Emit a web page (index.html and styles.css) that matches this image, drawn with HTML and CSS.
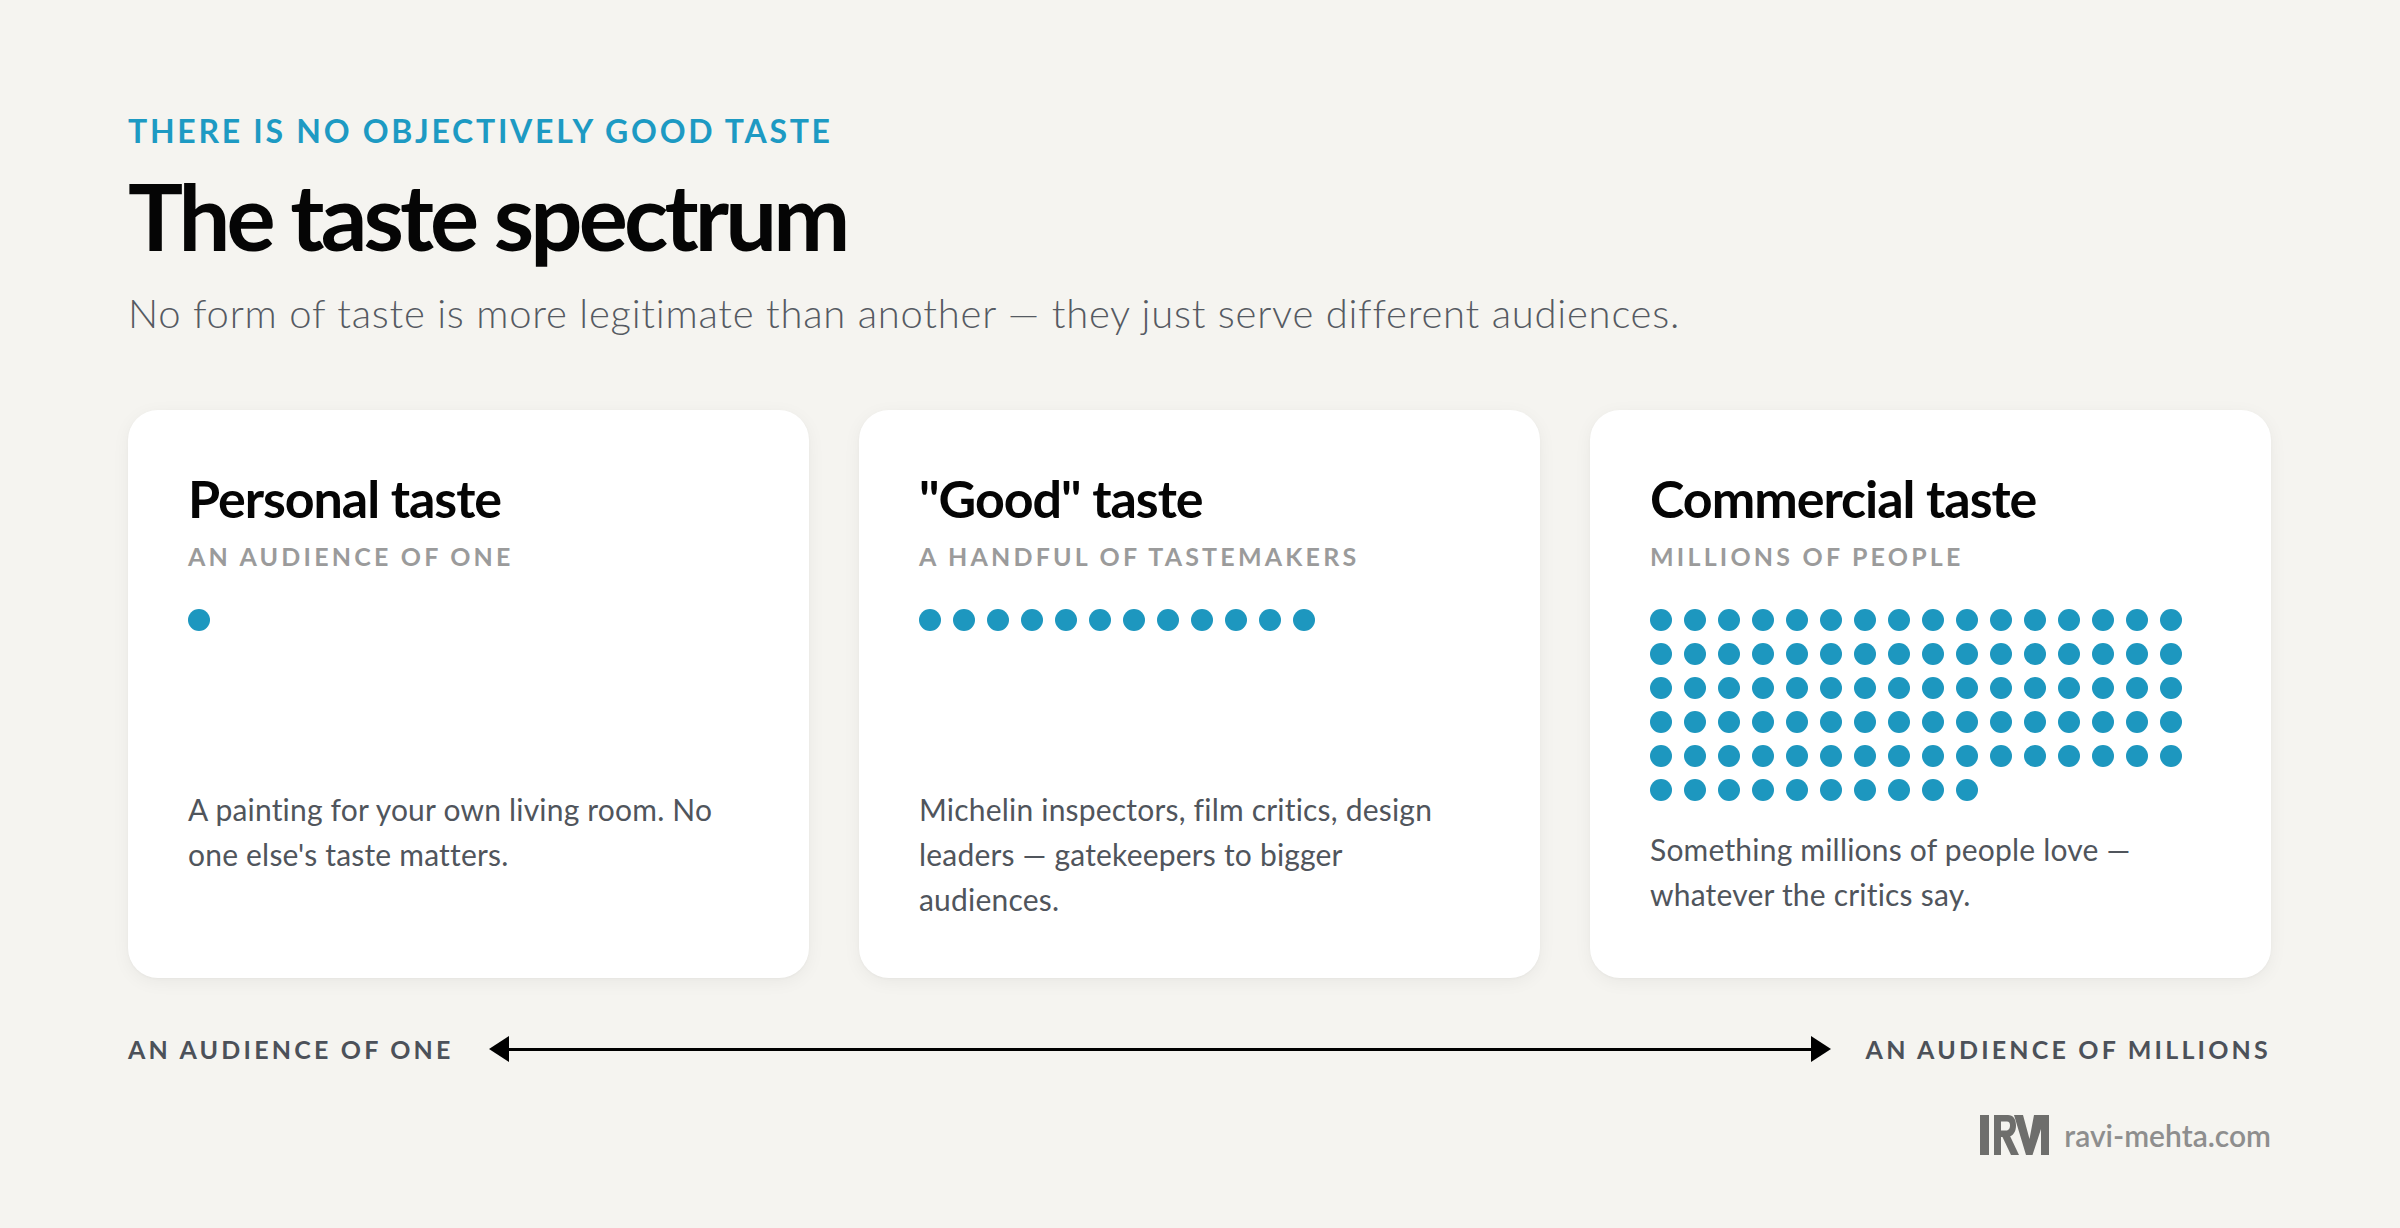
FILE: index.html
```html
<!DOCTYPE html>
<html lang="en">
<head>
<meta charset="utf-8">
<title>The taste spectrum</title>
<link rel="stylesheet" href="styles.css">
</head>
<body>
<main class="page">
  <header class="intro">
    <p class="eyebrow">THERE IS NO OBJECTIVELY GOOD TASTE</p>
    <h1 class="title">The taste spectrum</h1>
    <p class="lede">No form of taste is more legitimate than another — they just serve different audiences.</p>
  </header>

  <section class="cards">
    <article class="card">
      <h2 class="card-title">Personal taste</h2>
      <p class="card-sub">AN AUDIENCE OF ONE</p>
      <div class="dots">
        <i class="dot"></i>
      </div>
      <p class="card-desc">A painting for your own living room. No one else's taste matters.</p>
    </article>

    <article class="card">
      <h2 class="card-title">"Good" taste</h2>
      <p class="card-sub">A HANDFUL OF TASTEMAKERS</p>
      <div class="dots">
        <i class="dot"></i><i class="dot"></i><i class="dot"></i><i class="dot"></i><i class="dot"></i><i class="dot"></i>
        <i class="dot"></i><i class="dot"></i><i class="dot"></i><i class="dot"></i><i class="dot"></i><i class="dot"></i>
      </div>
      <p class="card-desc">Michelin inspectors, film critics, design leaders — gatekeepers to bigger audiences.</p>
    </article>

    <article class="card">
      <h2 class="card-title">Commercial taste</h2>
      <p class="card-sub">MILLIONS OF PEOPLE</p>
      <div class="dots">
        <i class="dot"></i><i class="dot"></i><i class="dot"></i><i class="dot"></i><i class="dot"></i><i class="dot"></i><i class="dot"></i><i class="dot"></i><i class="dot"></i><i class="dot"></i>
        <i class="dot"></i><i class="dot"></i><i class="dot"></i><i class="dot"></i><i class="dot"></i><i class="dot"></i><i class="dot"></i><i class="dot"></i><i class="dot"></i><i class="dot"></i>
        <i class="dot"></i><i class="dot"></i><i class="dot"></i><i class="dot"></i><i class="dot"></i><i class="dot"></i><i class="dot"></i><i class="dot"></i><i class="dot"></i><i class="dot"></i>
        <i class="dot"></i><i class="dot"></i><i class="dot"></i><i class="dot"></i><i class="dot"></i><i class="dot"></i><i class="dot"></i><i class="dot"></i><i class="dot"></i><i class="dot"></i>
        <i class="dot"></i><i class="dot"></i><i class="dot"></i><i class="dot"></i><i class="dot"></i><i class="dot"></i><i class="dot"></i><i class="dot"></i><i class="dot"></i><i class="dot"></i>
        <i class="dot"></i><i class="dot"></i><i class="dot"></i><i class="dot"></i><i class="dot"></i><i class="dot"></i><i class="dot"></i><i class="dot"></i><i class="dot"></i><i class="dot"></i>
        <i class="dot"></i><i class="dot"></i><i class="dot"></i><i class="dot"></i><i class="dot"></i><i class="dot"></i><i class="dot"></i><i class="dot"></i><i class="dot"></i><i class="dot"></i>
        <i class="dot"></i><i class="dot"></i><i class="dot"></i><i class="dot"></i><i class="dot"></i><i class="dot"></i><i class="dot"></i><i class="dot"></i><i class="dot"></i><i class="dot"></i>
        <i class="dot"></i><i class="dot"></i><i class="dot"></i><i class="dot"></i><i class="dot"></i><i class="dot"></i><i class="dot"></i><i class="dot"></i><i class="dot"></i><i class="dot"></i>
      </div>
      <p class="card-desc">Something millions of people love — whatever the critics say.</p>
    </article>
  </section>

  <div class="axis">
    <span class="axis-label">AN AUDIENCE OF ONE</span>
    <div class="arrow" aria-hidden="true">
      <svg class="arrow-head" width="20" height="26" viewBox="0 0 20 26"><polygon points="0,13 20,0 20,26"/></svg>
      <span class="arrow-line"></span>
      <svg class="arrow-head" width="20" height="26" viewBox="0 0 20 26"><polygon points="20,13 0,0 0,26"/></svg>
    </div>
    <span class="axis-label">AN AUDIENCE OF MILLIONS</span>
  </div>

  <footer class="brand">
    <svg class="brand-logo" width="69" height="40" viewBox="0 0 69 40" aria-label="RM">
      <rect x="0" y="0" width="9" height="40"/>
      <rect x="14" y="0" width="7" height="40"/>
      <path fill-rule="evenodd" d="M21 0 H28 C33 0 36 4 36 10.5 C36 17 33 21 28 22 H21 Z M21 6.5 H27 C29 6.5 30 8 30 10.5 C30 13 29 15 27 15.5 H21 Z"/>
      <polygon points="22,21 30,21 39,40 31,40"/>
      <polygon points="34,0 43,0 49.5,24 54,0 69,0 69,40 61,40 61,14 52.5,40 46,40"/>
    </svg>
    <span class="brand-name">ravi-mehta.com</span>
  </footer>
</main>
</body>
</html>
```

FILE: styles.css
```css
* { box-sizing: border-box; }

html, body {
  margin: 0;
  padding: 0;
  background: #f5f4f0;
}

body {
  font-family: Lato, "Noto Sans", "Liberation Sans", sans-serif;
  color: #111;
}

.page {
  width: 2400px;
  height: 1228px;
  padding: 112px 129px 0 128px;
  display: flex;
  flex-direction: column;
}

.intro {
  display: flex;
  flex-direction: column;
}

.eyebrow {
  margin: 0;
  font-size: 32px;
  line-height: 38px;
  font-weight: 700;
  letter-spacing: 0.085em;
  color: #1d9ac3;
}

.title {
  margin: 15px 0 0;
  font-size: 92px;
  line-height: 101px;
  font-weight: 700;
  letter-spacing: -0.042em;
  color: #050505;
}

.lede {
  margin: 24px 0 0;
  font-size: 40px;
  line-height: 47px;
  font-weight: 300;
  letter-spacing: 0.019em;
  color: #555a62;
}

.cards {
  margin-top: 73px;
  display: grid;
  grid-template-columns: repeat(3, 1fr);
  gap: 50px;
}

.card {
  background: #fff;
  border-radius: 30px;
  padding: 60px 60px 56px;
  box-shadow: 0 4px 18px rgba(0, 0, 0, 0.05), 0 1px 3px rgba(0, 0, 0, 0.03);
  display: flex;
  flex-direction: column;
}

.card-title {
  margin: 0;
  font-size: 52px;
  line-height: 57px;
  font-weight: 700;
  letter-spacing: -0.02em;
  color: #050505;
}

.card-sub {
  margin: 14px 0 0;
  font-size: 25px;
  line-height: 30px;
  font-weight: 700;
  letter-spacing: 0.128em;
  color: #9b9b9b;
}

.dots {
  margin-top: 38px;
  min-height: 152px;
  display: grid;
  grid-template-columns: repeat(16, 22px);
  grid-auto-rows: 22px;
  gap: 12px;
  align-content: start;
}

.dot {
  display: block;
  width: 22px;
  height: 22px;
  border-radius: 50%;
  background: #1d97bf;
}

.card-desc {
  margin: 26px 0 0;
  font-size: 30px;
  line-height: 45px;
  font-weight: 400;
  letter-spacing: 0.2px;
  color: #50555c;
}

.axis {
  margin-top: 56px;
  display: flex;
  align-items: center;
  gap: 35px;
}

.axis-label {
  font-size: 25px;
  line-height: 30px;
  font-weight: 700;
  letter-spacing: 0.128em;
  color: #4c5159;
  white-space: nowrap;
}

.arrow {
  flex: 1;
  display: flex;
  align-items: center;
}

.arrow-head {
  display: block;
  flex: none;
  fill: #000;
}

.arrow-line {
  flex: 1;
  height: 3px;
  background: #000;
}

.brand {
  margin-top: 51px;
  display: flex;
  justify-content: flex-end;
  align-items: center;
  gap: 15px;
}

.brand-logo {
  display: block;
  fill: #6e6e6c;
}

.brand-name {
  font-size: 30px;
  line-height: 40px;
  font-weight: 600;
  color: #8e8e8e;
}
```
